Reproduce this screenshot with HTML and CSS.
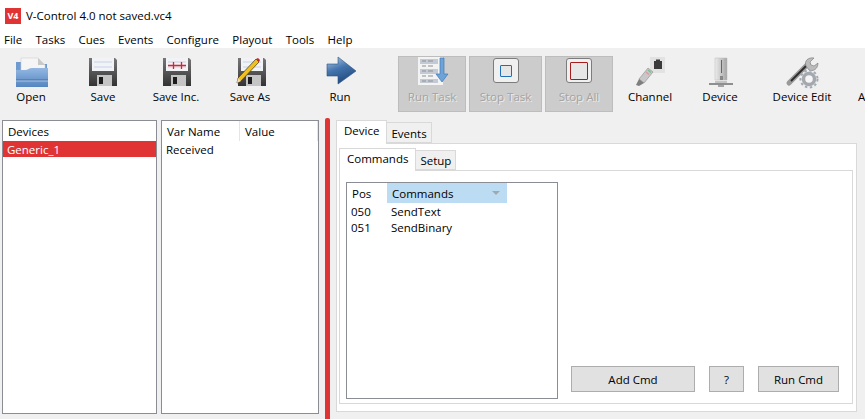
FILE: index.html
```html
<!DOCTYPE html>
<html>

<head>
    <meta name="viewport" content="width=device-width, initial-scale=1">
    <title>V-Control 4.0</title>
    <link rel="stylesheet" href="styles.css">
</head>

<body>
    <svg class="defs" width="0" height="0">
        <defs>
            <linearGradient id="diskBody" x1="0" y1="0" x2="0" y2="1">
                <stop offset="0" stop-color="#777" />
                <stop offset="1" stop-color="#333" />
            </linearGradient>
            <linearGradient id="blueFold" x1="0" y1="0" x2="0" y2="1">
                <stop offset="0" stop-color="#93b8e2" />
                <stop offset="1" stop-color="#5585c0" />
            </linearGradient>
            <linearGradient id="runArrow" x1="0" y1="0" x2="0.4" y2="1">
                <stop offset="0" stop-color="#b7cee8" />
                <stop offset="0.5" stop-color="#4475ae" />
                <stop offset="1" stop-color="#234b7e" />
            </linearGradient>
            <linearGradient id="steel" x1="0" y1="0" x2="1" y2="0">
                <stop offset="0" stop-color="#ececec" />
                <stop offset="1" stop-color="#a5a5a5" />
            </linearGradient>
            <g id="floppy">
                <path d="M0 1h26l2 2v26H0z" fill="url(#diskBody)" />
                <path d="M3 1h22v13H3z" fill="#f1f3f7" />
                <path d="M5 5h18M5 10h18" stroke="#c6d3e4" />
                <path d="M8 18h15v11H8z" fill="#c4c4c4" />
                <path d="M10 20h4v7h-4z" fill="#1c1c1c" />
            </g>
        </defs>
    </svg>

    <div class="titlebar">
        <span class="appIcon">V4</span>
        <span class="appTitle">V-Control 4.0 not saved.vc4</span>
    </div>

    <div class="menubar">
        <span>File</span>
        <span>Tasks</span>
        <span>Cues</span>
        <span>Events</span>
        <span>Configure</span>
        <span>Playout</span>
        <span>Tools</span>
        <span>Help</span>
    </div>

    <div class="toolbar">
        <div class="tool">
            <svg class="toolIcon" viewBox="0 0 32 32">
                <path d="M1 6h10l2 2h19v10H1z" fill="#6f9ad0" />
                <path d="M6 2h17l7 7v11H6z" fill="#f5f5f5" stroke="#d2d2d2" stroke-width="0.6" />
                <path d="M23 2l7 7h-7z" fill="#c9c9c9" />
                <path d="M1 14h9c3 0 4-2 7-2h16v19H1z" fill="url(#blueFold)" />
                <path d="M1 24h32" stroke="#3f6ca6" />
                <path d="M1 25h32" stroke="#a8c4e6" />
            </svg>
            <span>Open</span>
        </div>
        <div class="tool">
            <svg class="toolIcon" viewBox="0 0 32 32"><use href="#floppy" x="2" y="1" /></svg>
            <span>Save</span>
        </div>
        <div class="tool">
            <svg class="toolIcon" viewBox="0 0 32 32">
                <use href="#floppy" x="3" y="1" />
                <path class="plusMarks" d="M8 9.500h18M13.500 6v7M21.500 6v7" />
            </svg>
            <span>Save Inc.</span>
        </div>
        <div class="tool">
            <svg class="toolIcon" viewBox="0 0 32 32">
                <use href="#floppy" x="4" y="1" />
                <path d="M22 3l3 3L7 25l-4 2 1-5z" fill="#f0c020" stroke="#3c3320" stroke-width="0.7" />
                <path d="M22 3l2-1 2 2-1 2z" fill="#c8242a" />
                <path d="M3 27l1-5 3 3z" fill="#f3dcae" />
            </svg>
            <span>Save As</span>
        </div>
        <div class="tool toolRun">
            <svg class="toolIcon" viewBox="0 0 32 32">
                <path d="M3 8h11V1l18 14-18 13v-8H3z" fill="url(#runArrow)" stroke="#2a5285" stroke-width="0.6" />
            </svg>
            <span>Run</span>
        </div>
        <div class="tool toolOff">
            <svg class="toolIcon" viewBox="0 0 32 32">
                <path d="M2 1h25v28H2z" fill="#f3f3f3" />
                <path d="M4 3h18v5H4zM4 13h18v5H4zM4 23h18v4H4z" fill="#c4cad3" />
                <path d="M6 5h4M12 5h5M6 10h4M12 10h5M6 15h4M12 15h5M6 20h4M12 20h5M6 25h4M12 25h5" stroke="#8b8f96" />
                <path d="M24 2h4v16h4l-6 8-6-8h4z" fill="#6ea3d8" stroke="#3f78b4" stroke-width="0.7" />
            </svg>
            <span>Run Task</span>
        </div>
        <div class="tool toolOff">
            <div class="stopIcon"><div class="stopBlue"></div></div>
            <span>Stop Task</span>
        </div>
        <div class="tool toolOff">
            <div class="stopIcon"><div class="stopRed"></div></div>
            <span>Stop All</span>
        </div>
        <div class="tool">
            <svg class="toolIcon" viewBox="0 0 32 32">
                <path d="M16 1h15v16H16z" fill="#e2e2e2" />
                <path d="M20 5h8v8h-8z" fill="#3a3a3a" />
                <path d="M22 3.500h4v2h-4z" fill="#3a3a3a" />
                <path d="M14 12l5 4-9 11-5-4z" fill="#c8c8c8" stroke="#8a8a8a" stroke-width="0.6" />
                <path d="M5 23l5 4-5 3-3-1z" fill="#7e7e7e" />
                <path d="M14 14l3 2.500" stroke="#7ac08a" stroke-width="1.500" />
                <path d="M12 16l3 2.500" stroke="#d89aa6" stroke-width="1.500" />
            </svg>
            <span>Channel</span>
        </div>
        <div class="tool">
            <svg class="toolIcon" viewBox="0 0 32 32">
                <path d="M11 2h12v22H11z" fill="url(#steel)" stroke="#bbb" stroke-width="0.5" />
                <path d="M17 4h1v13h-1z" fill="#666" />
                <path d="M16 20h3v4h-3z" fill="#888" />
                <path d="M5 27h24v2H5z" fill="#8f8f8f" />
                <path d="M11 25h12v2H11z" fill="#c4c4c4" />
                <path d="M14 29h6v2h-6z" fill="#a5a5a5" />
            </svg>
            <span>Device</span>
        </div>
        <div class="tool">
            <svg class="toolIcon" viewBox="0 0 32 32">
                <path d="M3 27L22 8" stroke="#999" stroke-width="5" stroke-linecap="round" />
                <path d="M5 25L20 10" stroke="#2c2c2c" stroke-width="1.800" />
                <path d="M20 10c-2-5 2-9 8-8l-4 4 1 3 3 1 4-3c0 6-5 9-9 7z" fill="#bbb" stroke="#777" stroke-width="0.6" />
                <circle cx="23" cy="23" r="5.500" fill="#f6f6f6" stroke="#a4a9b0" stroke-width="3.500" />
                <circle cx="23" cy="23" r="8.500" fill="none" stroke="#a4a9b0" stroke-width="2" stroke-dasharray="2.500 2.500" />
            </svg>
            <span>Device Edit</span>
        </div>
        <div class="tool toolCut">
            <div class="toolBlank"></div>
            <span>A</span>
        </div>
    </div>

    <div class="main">
        <div class="panel devices">
            <div class="panelHead">Devices</div>
            <div class="deviceRow">Generic_1</div>
        </div>

        <div class="panel vars">
            <div class="varHead">
                <span class="varName">Var Name</span>
                <span class="varValue">Value</span>
            </div>
            <div class="varRow">Received</div>
        </div>

        <div class="splitter"></div>

        <div class="right">
            <div class="tabs">
                <span class="tab tabOn">Device</span>
                <span class="tab">Events</span>
            </div>
            <div class="tabPane outerPane">
                <div class="tabs">
                    <span class="tab tabOn">Commands</span>
                    <span class="tab">Setup</span>
                </div>
                <div class="tabPane innerPane">
                    <div class="cmdList">
                        <div class="cmdHead">
                            <span class="colPos">Pos</span>
                            <span class="colCmd">Commands<i class="sortArrow"></i></span>
                        </div>
                        <div class="cmdRow"><span class="cellPos">050</span><span>SendText</span></div>
                        <div class="cmdRow"><span class="cellPos">051</span><span>SendBinary</span></div>
                    </div>
                    <div class="actions">
                        <button class="btn btnAdd">Add Cmd</button>
                        <button class="btn btnHelp">?</button>
                        <button class="btn btnRun">Run Cmd</button>
                    </div>
                </div>
            </div>
        </div>
    </div>
</body>

</html>
```

FILE: styles.css
```css
* {
    box-sizing: border-box;
}

body {
    margin: 0;
    width: 865px;
    height: 419px;
    overflow: hidden;
    background: #f0f0f0;
    color: #000;
    font-family: "Open Sans", "Noto Sans", sans-serif;
    font-size: 11.5px;
}

.defs {
    position: absolute;
}

/* Window title */

.titlebar {
    display: flex;
    align-items: center;
    gap: 5px;
    height: 31px;
    padding-left: 5px;
    background: #fff;
}

.appIcon {
    width: 16px;
    height: 16px;
    background: #e03434;
    color: #fff;
    font-size: 9px;
    font-weight: 700;
    line-height: 16px;
    text-align: center;
}

/* Menu */

.menubar {
    display: flex;
    gap: 13.3px;
    height: 17px;
    padding-left: 4px;
    background: #fff;
    line-height: 17px;
}

/* Toolbar */

.toolbar {
    display: grid;
    grid-template-columns: 62px 82px 64px 84px 106px 71px 76px 68px 74px 66px 98px 14px;
    height: 67px;
    padding-top: 8px;
    overflow: hidden;
}

.tool {
    display: flex;
    flex-direction: column;
    align-items: center;
    height: 56px;
    white-space: nowrap;
}

.tool span {
    margin-top: 1px;
    line-height: 16px;
}

.toolIcon,
.toolBlank {
    flex: none;
    width: 32px;
    height: 32px;
    overflow: visible;
}

.plusMarks {
    fill: none;
    stroke: #e0202a;
    stroke-width: 1.3;
}

.toolRun {
    padding-right: 10px;
}

.toolOff {
    width: 68px;
    background: #ccc;
    border: 1px solid #bdbdbd;
    color: #a3a3a3;
    text-shadow: 1px 1px 0 #ececec;
}

.toolOff .toolIcon {
    margin-top: -1px;
}

.toolOff + .toolOff {
    width: 73px;
}

.toolOff + .toolOff + .toolOff {
    width: 68px;
}

.toolCut {
    align-items: flex-start;
    padding-left: 7px;
}

.stopIcon {
    display: flex;
    flex: none;
    align-items: center;
    justify-content: center;
    width: 26px;
    height: 25px;
    margin: 1px 0 5px;
    background: #f0f0f0;
    border: 1px solid #7c7c7c;
    border-radius: 3px;
}

.stopBlue,
.stopRed {
    width: 12px;
    height: 12px;
    border: 1px solid #1f6fb8;
    border-radius: 1px;
    background: #e6e6e6;
}

.stopRed {
    width: 18px;
    height: 18px;
    border-color: #a61c1c;
}

/* Main area */

.main {
    display: flex;
    height: 304px;
    padding-left: 2px;
}

.panel {
    height: 294px;
    margin-top: 5px;
    background: #fff;
    border: 1px solid #8a8d94;
}

.devices {
    width: 155px;
    margin-right: 4px;
}

.panelHead {
    height: 20px;
    padding-left: 5px;
    line-height: 22px;
}

.deviceRow {
    height: 16px;
    padding-left: 4px;
    background: #e03434;
    color: #fff;
    line-height: 17px;
}

.vars {
    width: 158px;
}

.varHead {
    display: flex;
    height: 20px;
    line-height: 22px;
}

.varName {
    width: 78px;
    padding-left: 5px;
    border-right: 1px solid #e5e5e5;
}

.varValue {
    width: 78px;
    padding-left: 5px;
    border-right: 1px solid #e5e5e5;
}

.varRow {
    padding-left: 4px;
    line-height: 18px;
}

.splitter {
    width: 5px;
    height: 301px;
    margin: 3px 6px 0;
    background: #e03434;
    border-radius: 2px 2px 0 0;
}

/* Tabs */

.right {
    width: 521px;
    padding-top: 5px;
}

.tabs {
    display: flex;
    align-items: flex-end;
    position: relative;
    z-index: 1;
}

.tab {
    height: 21px;
    padding: 0 4px;
    background: #f0f0f0;
    border: 1px solid #d9d9d9;
    border-left: 0;
    line-height: 21px;
}

.tabOn {
    height: 24px;
    margin-bottom: -1px;
    padding: 0 7px;
    background: #fff;
    border-left: 1px solid #d9d9d9;
    border-bottom: 0;
    line-height: 20px;
}

.tabPane {
    background: #fff;
    border: 1px solid #d9d9d9;
}

.outerPane {
    height: 269px;
    padding: 4px 3px 7px 2px;
}

.outerPane .tab {
    height: 20px;
    line-height: 20px;
}

.outerPane .tabOn {
    height: 23px;
    line-height: 19px;
}

.innerPane {
    display: flex;
    height: 234px;
    padding: 11px 0 4px 6px;
}

/* Command list */

.cmdList {
    flex: none;
    width: 212px;
    border: 1px solid #8a8d94;
}

.cmdHead {
    display: flex;
    height: 20px;
    line-height: 22px;
}

.colPos {
    width: 40px;
    padding-left: 5px;
}

.colCmd {
    position: relative;
    width: 120px;
    padding-left: 5px;
    background: #bcdcf4;
}

.sortArrow {
    position: absolute;
    top: 8px;
    right: 7px;
    border: 4px solid transparent;
    border-top: 4px solid #a0a8b0;
    border-bottom: 0;
}

.cmdRow {
    display: flex;
    height: 16px;
    padding-left: 4px;
    line-height: 18px;
}

.cellPos {
    width: 40px;
}

/* Buttons */

.actions {
    display: flex;
    align-self: flex-end;
    gap: 14px;
    margin: 0 0 7px 13px;
}

.btn {
    height: 26px;
    padding: 0;
    background: #e1e1e1;
    border: 1px solid #adadad;
    color: #000;
    font: inherit;
}

.btnAdd {
    width: 124px;
}

.btnHelp {
    width: 35px;
}

.btnRun {
    width: 81px;
}
```
